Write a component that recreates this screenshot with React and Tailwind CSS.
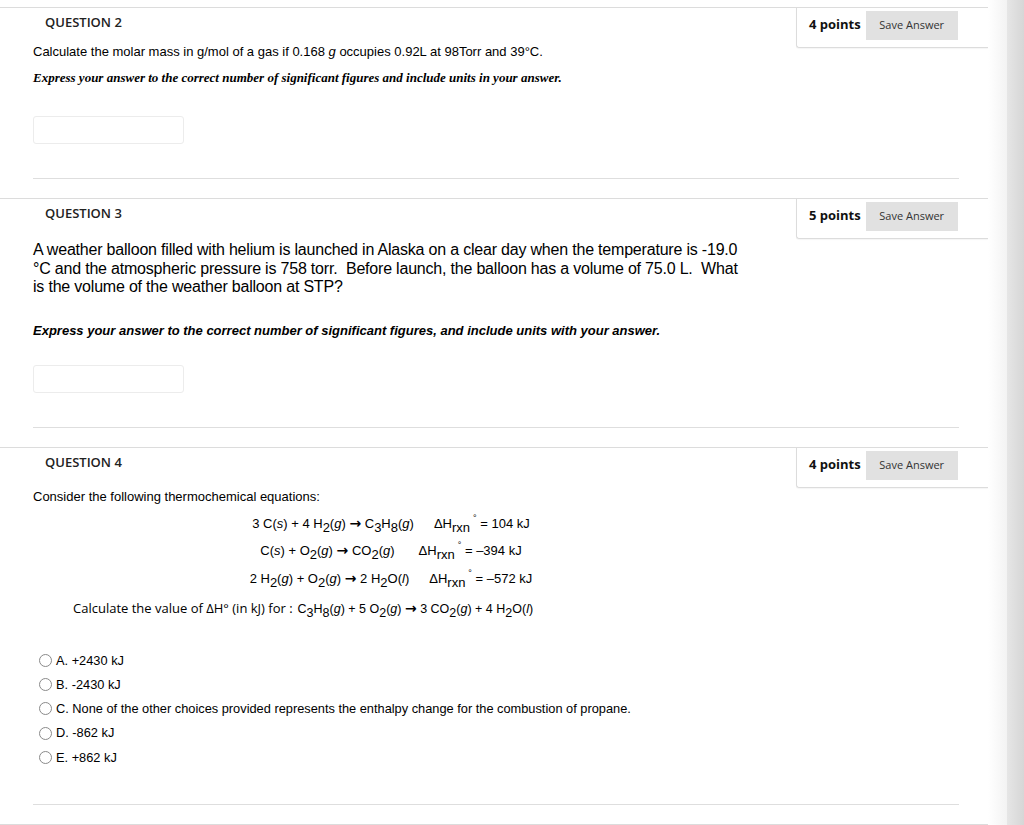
import React from 'react';

const sans = { fontFamily: '"Liberation Sans", Arial, sans-serif' };

function Sub({ children }) {
  return <span className="relative top-[4px]">{children}</span>;
}

function Arrow() {
  return <span className="font-['DejaVu_Sans',sans-serif] text-[14px] font-bold">→</span>;
}

function PointsBox({ points }) {
  return (
    <div className="float-right flex h-[40px] w-[192px] items-start rounded-bl-[3px] border-b border-l border-[#dcdcdc] pl-[12px] pt-[3px] font-['Open_Sans',sans-serif] shadow-[0_1px_1px_rgba(0,0,0,0.04)]">
      <span className="text-[13px] font-bold leading-[26px] text-[#111]">{points} points</span>
      <button className="ml-[5px] h-[29px] w-[92px] bg-[#e1e1e1] text-[11px] text-[#333]">Save Answer</button>
    </div>
  );
}

function QuestionLabel({ children }) {
  return (
    <div className="mt-[5px] pl-[45px] font-['Open_Sans',sans-serif] text-[13px] font-semibold leading-[18px] text-[#222]">
      {children}
    </div>
  );
}

function AnswerInput({ mt }) {
  return <div className={`ml-[33px] h-[28px] w-[151px] rounded-[3px] border border-[#ececec] ${mt}`} />;
}

function Separator() {
  return <div className="ml-[33px] mt-[34px] h-px w-[926px] bg-[#dedede]" />;
}

function Rxn({ value }) {
  return (
    <span>
      ΔH<Sub>rxn</Sub>
      <span className="relative top-[-7px] ml-[3px] text-[9px]">°</span> = {value} kJ
    </span>
  );
}

const options = [
  'A. +2430 kJ',
  'B. -2430 kJ',
  'C. None of the other choices provided represents the enthalpy change for the combustion of propane.',
  'D. -862 kJ',
  'E. +862 kJ',
];

export default function App() {
  return (
    <div className="flex h-[825px] w-[1024px] overflow-hidden bg-white text-black" style={sans}>
      <div className="w-[988px] shrink-0 pt-[7px]">
        {/* Question 2 */}
        <div className="border-t border-[#dcdcdc]">
          <PointsBox points={4} />
          <QuestionLabel>QUESTION 2</QuestionLabel>
          <p className="ml-[33px] mt-[12px] text-[13px] leading-[18px]">
            Calculate the molar mass in g/mol of a gas if 0.168 <i>g</i> occupies 0.92L at 98Torr and 39°C.
          </p>
          <p className="ml-[33px] mt-[8px] font-['Liberation_Serif',serif] text-[13px] font-bold italic leading-[18px]">
            Express your answer to the correct number of significant figures and include units in your answer.
          </p>
          <AnswerInput mt="mt-[29px]" />
          <Separator />
        </div>

        {/* Question 3 */}
        <div className="mt-[19px] border-t border-[#dcdcdc]">
          <PointsBox points={5} />
          <QuestionLabel>QUESTION 3</QuestionLabel>
          <p className="ml-[33px] mt-[19px] w-[740px] text-[16px] leading-[18.5px] tracking-[-0.2px]">
            A weather balloon filled with helium is launched in Alaska on a clear day when the temperature is -19.0
            <br />
            °C and the atmospheric pressure is 758 torr.&nbsp; Before launch, the balloon has a volume of 75.0 L.&nbsp; What
            <br />
            is the volume of the weather balloon at STP?
          </p>
          <p className="ml-[33px] mt-[25px] text-[13px] font-bold italic leading-[18px]">
            Express your answer to the correct number of significant figures, and include units with your answer.
          </p>
          <AnswerInput mt="mt-[25px]" />
          <Separator />
        </div>

        {/* Question 4 */}
        <div className="mt-[19px] border-t border-[#dcdcdc]">
          <PointsBox points={4} />
          <QuestionLabel>QUESTION 4</QuestionLabel>
          <p className="ml-[33px] mt-[17px] text-[13px] leading-[18px]">Consider the following thermochemical equations:</p>
          <div className="ml-[33px] mt-[4px] w-[716px] text-center text-[13px]">
            <div className="h-[27.5px] leading-[27.5px]">
              3 C(<i>s</i>) + 4 H<Sub>2</Sub>(<i>g</i>) <Arrow /> C<Sub>3</Sub>H<Sub>8</Sub>(<i>g</i>)
              <span className="ml-[20px]"><Rxn value="104" /></span>
            </div>
            <div className="h-[27.5px] leading-[27.5px]">
              C(<i>s</i>) + O<Sub>2</Sub>(<i>g</i>) <Arrow /> CO<Sub>2</Sub>(<i>g</i>)
              <span className="ml-[24px]"><Rxn value="–394" /></span>
            </div>
            <div className="h-[27.5px] leading-[27.5px]">
              2 H<Sub>2</Sub>(<i>g</i>) + O<Sub>2</Sub>(<i>g</i>) <Arrow /> 2 H<Sub>2</Sub>O(<i>l</i>)
              <span className="ml-[20px]"><Rxn value="–572" /></span>
            </div>
          </div>
          <div className="ml-[73px] mt-[3px] h-[27px] text-[13px] leading-[27px]">
            <span className="font-['Open_Sans',sans-serif]">Calculate the value of ΔH° (in kJ) for :</span>
            <span className="ml-[5px] text-[12.5px]">
              C<Sub>3</Sub>H<Sub>8</Sub>(<i>g</i>) + 5 O<Sub>2</Sub>(<i>g</i>) <Arrow /> 3 CO<Sub>2</Sub>(<i>g</i>) + 4 H<Sub>2</Sub>O(<i>l</i>)
            </span>
          </div>
          <div className="ml-[39px] mt-[26px] flex flex-col">
            {options.map((o) => (
              <label key={o} className="flex h-[24.3px] items-center text-[12.8px]">
                <span className="h-[13px] w-[13px] rounded-full border border-[#8a8a8a] bg-white" />
                <span className="ml-[4px]">{o}</span>
              </label>
            ))}
          </div>
          <div className="ml-[33px] mt-[35px] h-px w-[926px] bg-[#dedede]" />
          <div className="mt-[19px] border-t border-[#dcdcdc]" />
        </div>
      </div>
      <div className="flex flex-1">
        <div className="w-[19px] bg-gradient-to-r from-white to-[#f3f3f3]" />
        <div className="flex-1 bg-gradient-to-r from-[#e6e6e6] to-[#d6d6d6]" />
      </div>
    </div>
  );
}
